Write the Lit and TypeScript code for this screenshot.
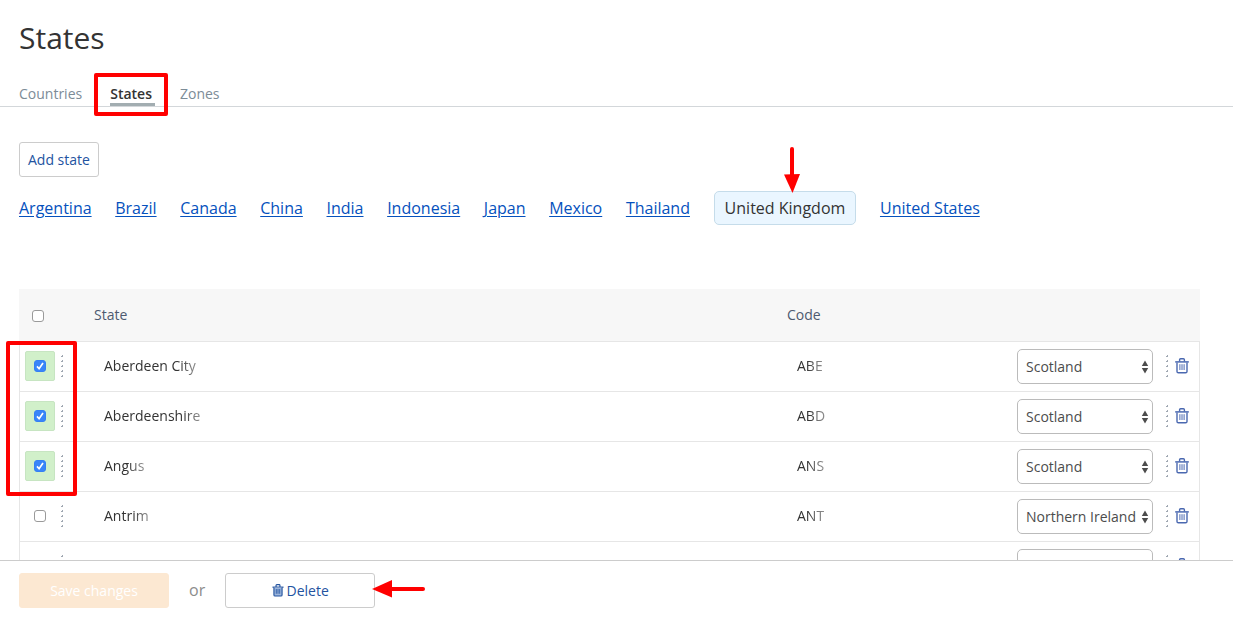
import { LitElement, html, css, svg } from "lit";
import { customElement, state } from "lit/decorators.js";

interface StateRow {
  name: string;
  code: string;
  region: string;
  checked: boolean;
}

const COUNTRIES = [
  "Argentina", "Brazil", "Canada", "China", "India", "Indonesia",
  "Japan", "Mexico", "Thailand", "United Kingdom", "United States",
];

const REGIONS = ["England", "Northern Ireland", "Scotland", "Wales"];

const trashIcon = (filled: boolean) => html`
  <svg class="trash" viewBox="0 0 14 16" fill="none" stroke="currentColor" aria-hidden="true">
    ${svg`
      <path d="M4.6 3.6V1.8Q4.6 .8 5.6 .8H8.4Q9.4 .8 9.4 1.8V3.6" stroke-width="1.4"/>
      <path d="M.2 3.9H13.8" stroke-width="1.5"/>
      <path d="M2 4.4V13.4Q2 14.8 3.4 14.8H10.6Q12 14.8 12 13.4V4.4" stroke-width="1.4" fill=${filled ? "#9db6dc" : "none"}/>
      <path d="M4.9 6.2V12M7 6.2V12M9.1 6.2V12" stroke-width="1"/>
    `}
  </svg>
`;

@customElement("app-root")
export class AppRoot extends LitElement {
  @state() private rows: StateRow[] = [
    { name: "Aberdeen City", code: "ABE", region: "Scotland", checked: true },
    { name: "Aberdeenshire", code: "ABD", region: "Scotland", checked: true },
    { name: "Angus", code: "ANS", region: "Scotland", checked: true },
    { name: "Antrim", code: "ANT", region: "Northern Ireland", checked: false },
    { name: "", code: "", region: "", checked: false },
  ];

  static styles = css`
    :host {
      display: flex;
      flex-direction: column;
      height: 100vh;
      background: #fff;
      color: #333;
      font: 14px/20px "Open Sans", "Noto Sans", sans-serif;
    }
    * { box-sizing: border-box; }
    main { flex: 1; min-height: 0; overflow: hidden; }
    h1 {
      margin: 0;
      padding: 16px 19px 0;
      font-size: 30px;
      font-weight: 400;
      line-height: 44px;
    }
    .tabs {
      display: flex;
      gap: 28px;
      margin-top: 24px;
      padding: 0 19px;
      border-bottom: 1px solid #d3d7da;
    }
    .tab {
      position: relative;
      height: 22px;
      line-height: 20px;
      color: #7c8c97;
      text-decoration: none;
    }
    .tab.active { color: #333; font-weight: 600; }
    .tab.active::after {
      content: "";
      position: absolute;
      left: 0;
      right: -3px;
      bottom: 0;
      height: 3px;
      background: #a2adb1;
    }
    .mark {
      position: absolute;
      border: 4px solid #f00;
      border-radius: 2px;
      pointer-events: none;
    }
    .mark-tab { inset: -11px -16px -10px; }
    .mark-checks { left: -13px; top: 52px; width: 71px; height: 155px; z-index: 1; }
    .arrow { position: absolute; fill: #f00; stroke: #f00; pointer-events: none; }
    .arrow-down { left: 68px; top: -46px; width: 18px; height: 48px; }
    .arrow-left { right: -52px; top: 5px; width: 54px; height: 20px; }
    .content { padding: 35px 33px 0 19px; }
    .btn {
      position: relative;
      display: inline-flex;
      align-items: center;
      justify-content: center;
      height: 35px;
      padding: 0 8px;
      border: 1px solid #ccc;
      border-radius: 3px;
      background: #fff;
      color: #23539f;
      font: inherit;
    }
    .add { display: flex; }
    .countries { margin-top: 14px; }
    .country {
      display: inline-block;
      margin-right: 20px;
      color: #0551bd;
      font-size: 16px;
      line-height: 22px;
      text-underline-offset: 2px;
    }
    .country.active {
      position: relative;
      padding: 5px 10px;
      border: 1px solid #c5dcea;
      border-radius: 5px;
      background: #eaf6ff;
      color: #333;
      text-decoration: none;
    }
    .list { position: relative; margin-top: 64px; }
    table { width: 100%; border-collapse: separate; border-spacing: 0; table-layout: fixed; }
    .col-check { width: 67px; }
    .col-code { width: 230px; }
    .col-tools { width: 191px; }
    th {
      height: 52px;
      padding: 0 8px;
      background: #f7f7f7;
      color: #4d5a70;
      font-weight: 400;
      text-align: left;
    }
    th:first-child { padding: 2px 0 0 13px; }
    td { height: 50px; padding: 0 18px 2px; border-top: 1px solid #e6e6e6; }
    td:first-child { padding-left: 5px; padding-right: 0; border-left: 1px solid #e6e6e6; }
    td:last-child { padding: 0 8px; border-right: 1px solid #e6e6e6; }
    .row-tools { display: flex; align-items: center; }
    .pick {
      display: flex;
      align-items: center;
      justify-content: center;
      width: 30px;
      height: 30px;
      border: 1px solid transparent;
      border-radius: 2px;
    }
    .pick.on { background: #d1f0ca; border-color: #c7e5c2; }
    .check {
      display: block;
      appearance: none;
      width: 12px;
      height: 12px;
      margin: 0;
      border: 1px solid #9a9a9a;
      border-radius: 3px;
      background: #fff;
    }
    .check:checked {
      border-color: #3480f4;
      background: #3985f9 url("data:image/svg+xml,%3Csvg xmlns='http://www.w3.org/2000/svg' viewBox='0 0 10 10'%3E%3Cpath d='M2 5.4L4.1 7.7L8 2' fill='none' stroke='white' stroke-width='1.7'/%3E%3C/svg%3E") center / 10px 10px no-repeat;
    }
    .grip { width: 3px; height: 22px; margin-left: 6px; }
    .fade {
      display: inline-block;
      vertical-align: middle;
      mask-image: linear-gradient(to left, rgba(0, 0, 0, 0.55), rgba(0, 0, 0, 0.7) 8px, #000 16px);
    }
    .select { position: relative; width: 136px; }
    select {
      display: block;
      appearance: none;
      width: 100%;
      height: 35px;
      padding: 0 14px 0 8px;
      border: 1px solid #bbb;
      border-radius: 5px;
      background: #fff;
      color: #4c4c4c;
      font: inherit;
    }
    .updown { position: absolute; right: 4px; top: 11px; width: 8px; height: 14px; pointer-events: none; }
    .tools-grip { margin: 0 0 1px 13px; }
    .icon-btn {
      display: flex;
      margin: 0 0 1px 6px;
      padding: 0;
      border: 0;
      background: none;
      color: #4a68b0;
    }
    .trash { width: 14px; height: 16px; }
    footer {
      display: flex;
      align-items: center;
      gap: 20px;
      height: 57px;
      padding: 3px 19px 0;
      border-top: 1px solid #ccc;
      background: #fff;
    }
    .wide { width: 150px; gap: 3px; }
    .wide .trash { width: 12px; height: 13px; }
    .save { border-color: #fce8d2; background: #fce8d2; color: #fff; }
    .or { padding-bottom: 2px; color: #8c8c8c; font-size: 16px; }
  `;

  private toggle(index: number, checked: boolean) {
    this.rows = this.rows.map((r, i) => (i === index ? { ...r, checked } : r));
  }

  private toggleAll(checked: boolean) {
    this.rows = this.rows.map((r) => ({ ...r, checked }));
  }

  private grip(extra = "") {
    return html`<svg class="grip ${extra}" viewBox="0 0 3 22" aria-hidden="true">
      ${[0, 5, 10, 15, 20].map((y) => svg`<path d="M1 ${y}H2V${y + 2}H0V${y + 1}H1Z" fill="#a0a8b2"/>`)}
    </svg>`;
  }

  private renderRow(row: StateRow, index: number) {
    return html`
      <tr>
        <td>
          <div class="row-tools">
            <label class="pick ${row.checked ? "on" : ""}">
              <input class="check" type="checkbox" aria-label="Select ${row.name}" .checked=${row.checked}
                @change=${(e: Event) => this.toggle(index, (e.target as HTMLInputElement).checked)} />
            </label>
            ${this.grip()}
          </div>
        </td>
        <td><span class="fade">${row.name}</span></td>
        <td><span class="fade">${row.code}</span></td>
        <td>
          <div class="row-tools">
            <div class="select">
              <select aria-label="Region of ${row.name}">
                ${row.region ? null : html`<option></option>`}
                ${REGIONS.map((r) => html`<option ?selected=${r === row.region}>${r}</option>`)}
              </select>
              <svg class="updown" viewBox="0 0 8 14" fill="#4c4c4c" aria-hidden="true">
                <path d="M4 .5L7.2 6H.8ZM4 13.5L7.2 8H.8Z" />
              </svg>
            </div>
            ${this.grip("tools-grip")}
            <button class="icon-btn" type="button" aria-label="Delete ${row.name}">${trashIcon(false)}</button>
          </div>
        </td>
      </tr>
    `;
  }

  render() {
    return html`
      <main>
        <h1>States</h1>
        <nav class="tabs">
          <a class="tab" href="#countries">Countries</a>
          <a class="tab active" href="#states">States<span class="mark mark-tab"></span></a>
          <a class="tab" href="#zones">Zones</a>
        </nav>
        <div class="content">
          <button class="btn add" type="button">Add state</button>
          <nav class="countries">
            ${COUNTRIES.map((c) =>
              c === "United Kingdom"
                ? html`<a class="country active" href="#${c}">${c}<svg class="arrow arrow-down" viewBox="0 0 18 48" aria-hidden="true">
                    <path d="M9 3V30" stroke-width="4" stroke-linecap="round" />
                    <path d="M1 28.5L17 28L9.5 47Z" stroke="none" />
                  </svg></a> `
                : html`<a class="country" href="#${c}">${c}</a> `
            )}
          </nav>
          <div class="list">
            <table>
              <colgroup>
                <col class="col-check" />
                <col />
                <col class="col-code" />
                <col class="col-tools" />
              </colgroup>
              <thead>
                <tr>
                  <th>
                    <input class="check" type="checkbox" aria-label="Select all"
                      @change=${(e: Event) => this.toggleAll((e.target as HTMLInputElement).checked)} />
                  </th>
                  <th>State</th>
                  <th>Code</th>
                  <th></th>
                </tr>
              </thead>
              <tbody>${this.rows.map((r, i) => this.renderRow(r, i))}</tbody>
            </table>
            <span class="mark mark-checks"></span>
          </div>
        </div>
      </main>
      <footer>
        <button class="btn wide save" type="button">Save changes</button>
        <span class="or">or</span>
        <button class="btn wide" type="button">${trashIcon(true)}Delete<svg class="arrow arrow-left" viewBox="0 0 54 20" aria-hidden="true">
            <path d="M18 10H51" stroke-width="4" stroke-linecap="round" />
            <path d="M0 10L20 1V18.5Z" stroke="none" />
          </svg></button>
      </footer>
    `;
  }
}
